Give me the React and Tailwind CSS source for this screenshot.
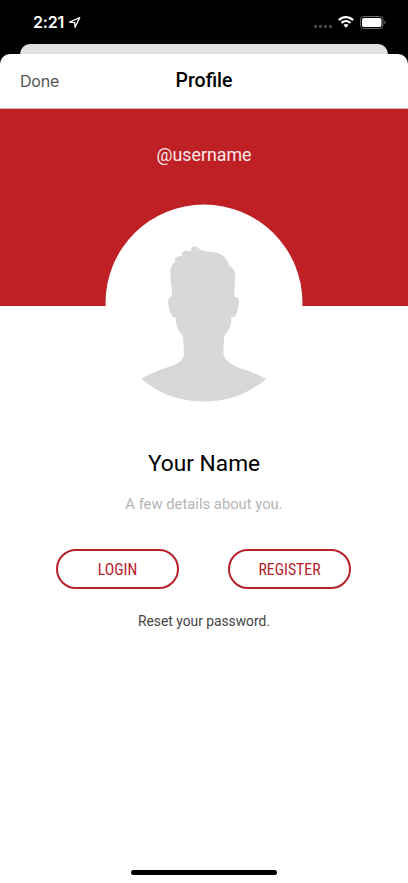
import clsx from "clsx";

function StatusBar() {
  return (
    <div className="flex h-11 items-center justify-between pr-[22px] pl-[33px] text-white">
      <div className="flex items-center gap-[3.5px]">
        <span className="font-['Inter',sans-serif] text-[16px] leading-5 font-semibold tracking-[-0.2px]">
          2:21
        </span>
        <svg width="13" height="13" viewBox="0 0 13 13" fill="none">
          <path
            d="M11.700 1.600 L1.600 6 L6.700 6.700 L7 11.300 Z"
            stroke="currentColor"
            strokeWidth="1.3"
            strokeLinejoin="round"
          />
        </svg>
      </div>

      <div className="flex items-center">
        <div className="mt-[8px] mr-[6px] flex gap-[2px]">
          <span className="size-[3px] rounded-[1px] bg-[#4a4a4a]" />
          <span className="size-[3px] rounded-[1px] bg-[#4a4a4a]" />
          <span className="size-[3px] rounded-[1px] bg-[#4a4a4a]" />
          <span className="size-[3px] rounded-[1px] bg-[#4a4a4a]" />
        </div>
        <svg width="16" height="12" viewBox="0 0 16 12" className="mr-[6px]" fill="currentColor">
          <path d="M8 0C5 0 2.300 1.200.3 3.100a.35.35 0 0 0 0 .5l1.100 1.100c.15.15.35.15.5 0A8.900 8.900 0 0 1 8 2.300c2.300 0 4.500.9 6.100 2.400.15.15.35.15.5 0l1.100-1.100a.35.35 0 0 0 0-.5A11.200 11.200 0 0 0 8 0Z" />
          <path d="M8 4C6.100 4 4.300 4.700 3 5.900a.35.35 0 0 0 0 .5l1.100 1.100c.15.15.35.15.5 0a5 5 0 0 1 6.800 0c.15.15.35.15.5 0L13 6.400a.35.35 0 0 0 0-.5A7.300 7.300 0 0 0 8 4Z" />
          <path d="M8 7.900c-.9 0-1.700.3-2.300.8a.35.35 0 0 0 0 .5l2 2.200c.15.2.45.2.6 0l2-2.200a.35.35 0 0 0 0-.5c-.6-.5-1.400-.8-2.300-.8Z" />
        </svg>
        <svg width="26" height="13" viewBox="0 0 26 13">
          <rect x="0.500" y="0.500" width="22.500" height="12" rx="3.500" fill="none" stroke="#6b6b6b" />
          <rect x="2" y="2" width="19.500" height="9" rx="2" fill="#fff" />
          <path d="M24.300 4.500v4c.8-.4 1.300-1.100 1.300-2s-.5-1.600-1.300-2Z" fill="#6b6b6b" />
        </svg>
      </div>
    </div>
  );
}

function Avatar() {
  return (
    <svg width="198" height="198" viewBox="105 204 198 198">
      <circle cx="204" cy="303" r="98.500" fill="#fff" />
      <path
        fill="#d8d8d8"
        d="M141.300 379 C151 372.500 164 368.500 174 365 C180 362.800 184 358.500 184 353 L183.200 337 C179 331.500 176.200 327 175.900 321 L175.300 317 C173.200 317.600 171.800 316.500 170.800 313.500 C169.200 309.500 168 305 168.300 301 C168.500 298.500 169.800 297 172 296.600 C172.300 289 170.300 280 170.300 272 C170.400 267.500 172 264 175.300 261.700 C174.500 260.500 174.500 259 175.600 257.900 C177.500 256.300 180 256 182.800 256 C181.300 254.800 181.200 253.500 182.200 252.400 C184.500 250.500 187.500 250.500 191.300 251.500 C190.800 249.500 191 247 193.500 246.400 C196.500 246 199 249.700 203.500 251 C207.500 252 211.500 251.700 215.500 252.500 C222.500 254 227.800 258.500 228.800 266 C232.500 267 234.900 270 235 274 C235.300 282 234 289 234.500 297 C237.800 296.500 239.200 298.500 239 302 C238.700 306.500 237.500 311.500 236 315 C235 317 233.500 317.700 231.400 316.800 C231.500 325 228.800 331 224.200 336.500 L223.300 353 C224.500 360 230.500 364 237 367 C247 370.500 257 373.500 266.300 379 C248 394 228 401.500 204 401.500 C180 401.500 159.500 394 141.300 379 Z"
      />
    </svg>
  );
}

function OutlineButton({ children, className }) {
  return (
    <button
      className={clsx(
        "flex h-10 w-[123px] items-center justify-center rounded-full border-2 border-[#b5202a] pt-[2px] text-[15.8px] text-[#b5202a]",
        className
      )}
    >
      <span className="font-['Roboto_Condensed','Roboto',sans-serif] font-stretch-condensed">
        {children}
      </span>
    </button>
  );
}

export default function App() {
  return (
    <div className="flex h-[883px] w-[408px] flex-col overflow-hidden bg-black font-['Roboto',sans-serif]">
      <StatusBar />
      <div className="mx-5 h-[9.5px] shrink-0 rounded-t-[10px] bg-[#e0e0e0]" />

      <div className="flex grow flex-col overflow-hidden rounded-t-[10px] bg-white">
        <header className="grid h-[55px] shrink-0 grid-cols-[1fr_auto_1fr] items-center border-b border-[#dcb5b8] px-5">
          <button className="mt-px justify-self-start font-['Inter',sans-serif] text-[16px] tracking-[-0.2px] text-[#555]">
            Done
          </button>
          <h1 className="mt-px text-[19.500px] font-medium text-black">Profile</h1>
        </header>

        <main className="flex grow flex-col items-center">
          <section className="flex h-[197px] w-full shrink-0 flex-col items-center bg-[#be2026] pt-[34.5px]">
            <p className="text-[17.8px] leading-6 text-[#fbe9ea]">@username</p>
            <div className="mt-[37px]">
              <Avatar />
            </div>
          </section>

          <h2 className="mt-[142.5px] text-[22.7px] leading-8 text-black">Your Name</h2>
          <p className="mt-[14px] text-[14.8px] leading-5 text-[#b5b5b5]">A few details about you.</p>

          <div className="mt-[35px] mr-px flex gap-[49px]">
            <OutlineButton>LOGIN</OutlineButton>
            <OutlineButton>REGISTER</OutlineButton>
          </div>

          <a className="mt-[22px] text-[13.8px] leading-5 text-[#444]">Reset your password.</a>

          <div className="mt-auto mb-2 h-[5px] w-[146px] rounded-full bg-black" />
        </main>
      </div>
    </div>
  );
}
